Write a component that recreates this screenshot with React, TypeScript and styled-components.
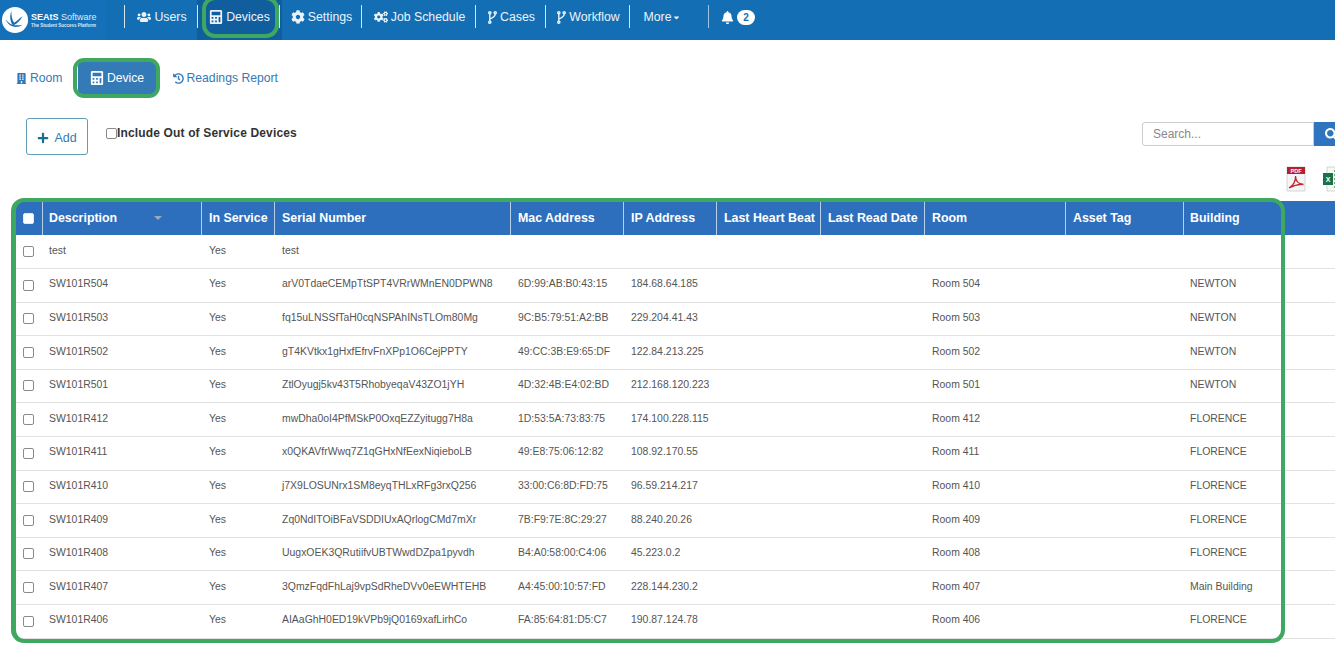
import React from 'react'
import styled, { createGlobalStyle } from 'styled-components'
import { FaUsers, FaCalculator, FaCog, FaCogs, FaBell, FaPlus, FaHistory, FaBuilding, FaSearch, FaCaretDown } from 'react-icons/fa'

const GlobalStyle = createGlobalStyle`
  html, body { margin: 0; padding: 0; background: #fff; overflow: hidden; }
  body { font-family: "Liberation Sans", Arial, sans-serif; color: #555; }
`

const ForkIcon = () => (
  <svg width="9" height="13" viewBox="0 0 9 13" fill="none" stroke="currentColor" strokeWidth="1.400">
    <circle cx="1.800" cy="1.800" r="1.100" />
    <circle cx="7.200" cy="1.800" r="1.100" />
    <circle cx="1.800" cy="11.200" r="1.100" />
    <path d="M1.800 3v7M7.200 3c0 3-2 3.500-5.400 5" />
  </svg>
)

const navItems = [
  { label: 'Users', icon: <FaUsers />, width: 73 },
  { label: 'Devices', icon: <FaCalculator />, width: 82, active: true },
  { label: 'Settings', icon: <FaCog />, width: 82 },
  { label: 'Job Schedule', icon: <FaCogs />, width: 114 },
  { label: 'Cases', icon: <ForkIcon />, width: 70 },
  { label: 'Workflow', icon: <ForkIcon />, width: 84 },
]

const rows = [
  ['test', 'Yes', 'test', '', '', '', ''],
  ['SW101R504', 'Yes', 'arV0TdaeCEMpTtSPT4VRrWMnEN0DPWN8', '6D:99:AB:B0:43:15', '184.68.64.185', 'Room 504', 'NEWTON'],
  ['SW101R503', 'Yes', 'fq15uLNSSfTaH0cqNSPAhINsTLOm80Mg', '9C:B5:79:51:A2:BB', '229.204.41.43', 'Room 503', 'NEWTON'],
  ['SW101R502', 'Yes', 'gT4KVtkx1gHxfEfrvFnXPp1O6CejPPTY', '49:CC:3B:E9:65:DF', '122.84.213.225', 'Room 502', 'NEWTON'],
  ['SW101R501', 'Yes', 'ZtlOyugj5kv43T5RhobyeqaV43ZO1jYH', '4D:32:4B:E4:02:BD', '212.168.120.223', 'Room 501', 'NEWTON'],
  ['SW101R412', 'Yes', 'mwDha0oI4PfMSkP0OxqEZZyitugg7H8a', '1D:53:5A:73:83:75', '174.100.228.115', 'Room 412', 'FLORENCE'],
  ['SW101R411', 'Yes', 'x0QKAVfrWwq7Z1qGHxNfEexNiqieboLB', '49:E8:75:06:12:82', '108.92.170.55', 'Room 411', 'FLORENCE'],
  ['SW101R410', 'Yes', 'j7X9LOSUNrx1SM8eyqTHLxRFg3rxQ256', '33:00:C6:8D:FD:75', '96.59.214.217', 'Room 410', 'FLORENCE'],
  ['SW101R409', 'Yes', 'Zq0NdITOiBFaVSDDIUxAQrlogCMd7mXr', '7B:F9:7E:8C:29:27', '88.240.20.26', 'Room 409', 'FLORENCE'],
  ['SW101R408', 'Yes', 'UugxOEK3QRutiifvUBTWwdDZpa1pyvdh', 'B4:A0:58:00:C4:06', '45.223.0.2', 'Room 408', 'FLORENCE'],
  ['SW101R407', 'Yes', '3QmzFqdFhLaj9vpSdRheDVv0eEWHTEHB', 'A4:45:00:10:57:FD', '228.144.230.2', 'Room 407', 'Main Building'],
  ['SW101R406', 'Yes', 'AIAaGhH0ED19kVPb9jQ0169xafLirhCo', 'FA:85:64:81:D5:C7', '190.87.124.78', 'Room 406', 'FLORENCE'],
]

const columns = [
  { label: 'Description', width: 159 },
  { label: 'In Service', width: 73 },
  { label: 'Serial Number', width: 236 },
  { label: 'Mac Address', width: 113 },
  { label: 'IP Address', width: 93 },
  { label: 'Last Heart Beat', width: 104 },
  { label: 'Last Read Date', width: 104 },
  { label: 'Room', width: 141 },
  { label: 'Asset Tag', width: 118 },
  { label: 'Building', width: 152 },
]

export default function App() {
  return (
    <Page>
      <GlobalStyle />
      <NavBar>
        <Logo>
          <svg width="28" height="28" viewBox="0 0 30 30">
            <circle cx="15" cy="15" r="14" fill="#fff" />
            <path d="M11 5c-2 7-1 12 2 16 2-1 7-4 10-10-4 3-7 6-9 7-2-3-3-8-3-13z" fill="#146eb4" />
            <path d="M5 14c1 4 4 7 8 8 3 1 7 0 10-2-4 1-8 1-11 0-3-1-5-3-7-6z" fill="#146eb4" />
          </svg>
          <LogoText>
            <LogoTitle><b>SEAtS</b> Software</LogoTitle>
            <LogoTagline>The Student Success Platform</LogoTagline>
          </LogoText>
        </Logo>
        <NavList>
          {navItems.map((item) => (
            <NavItem key={item.label} $width={item.width} $active={item.active}>
              {item.icon}
              {item.label}
            </NavItem>
          ))}
          <MoreItem>More<FaCaretDown /></MoreItem>
          <BellItem>
            <FaBell />
            <Badge>2</Badge>
          </BellItem>
        </NavList>
        <HighlightNav />
      </NavBar>

      <Tabs>
        <Tab><FaBuilding />Room</Tab>
        <ActiveTab>
          <FaCalculator />Device
          <HighlightTab />
        </ActiveTab>
        <Tab><FaHistory />Readings Report</Tab>
      </Tabs>

      <Toolbar>
        <AddButton><FaPlus />Add</AddButton>
        <OutOfService>
          <OutCheck type="checkbox" />
          Include Out of Service Devices
        </OutOfService>
        <SearchGroup>
          <SearchInput placeholder="Search..." />
          <SearchButton><FaSearch /></SearchButton>
        </SearchGroup>
      </Toolbar>

      <ExportRow>
        <svg width="24" height="26" viewBox="0 0 24 26">
          <path d="M3 1h18v24H3z" fill="#f5f5f5" stroke="#ccc" strokeWidth="0.8" />
          <rect x="3" y="1" width="18" height="7" fill="#b5202a" />
          <text x="12" y="6.6" fontSize="5.5" fontWeight="700" fill="#fff" textAnchor="middle" fontFamily="Liberation Sans">PDF</text>
          <path d="M5 22c4-2 7-7 6.5-12 0 5 3 8 8 8.5-5-.5-10 1-14.500 3.500z" fill="none" stroke="#c0272d" strokeWidth="1.300" />
        </svg>
        <svg width="24" height="26" viewBox="0 0 24 26">
          <path d="M5 1h16v24H5z" fill="#f4f8f4" stroke="#ccc" strokeWidth="0.8" />
          <path d="M12 5h8M12 9h8M12 13h8M12 17h8M12 21h8" stroke="#3f9a60" strokeWidth="1.500" />
          <rect x="1" y="7" width="10" height="12" fill="#1e7145" />
          <text x="6" y="16" fontSize="7" fontWeight="700" fill="#fff" textAnchor="middle" fontFamily="Liberation Sans">X</text>
        </svg>
      </ExportRow>

      <TableWrap>
        <Table>
          <colgroup>
            <col style={{ width: 26 }} />
            {columns.map((c) => <col key={c.label} style={{ width: c.width }} />)}
          </colgroup>
          <thead>
            <tr>
              <HeadCheck><HeaderBox type="checkbox" /></HeadCheck>
              {columns.map((c, i) => (
                <HeadCell key={c.label}>
                  {c.label}
                  {i === 0 && <SortCaret />}
                </HeadCell>
              ))}
            </tr>
          </thead>
          <tbody>
            {rows.map((r) => (
              <Row key={r[0]}>
                <CheckCell><RowBox type="checkbox" /></CheckCell>
                <Cell>{r[0]}</Cell>
                <Cell>{r[1]}</Cell>
                <Cell>{r[2]}</Cell>
                <Cell>{r[3]}</Cell>
                <Cell>{r[4]}</Cell>
                <Cell />
                <Cell />
                <Cell>{r[5]}</Cell>
                <Cell />
                <Cell>{r[6]}</Cell>
              </Row>
            ))}
          </tbody>
        </Table>
        <HighlightTable />
      </TableWrap>
    </Page>
  )
}

const Page = styled.div`
  width: 1335px;
  height: 649px;
  overflow: hidden;
`

const NavBar = styled.div`
  position: relative;
  display: flex;
  height: 40px;
  background: #146eb4;
`

const Logo = styled.div`
  display: flex;
  align-items: center;
  gap: 2px;
  width: 105px;
  padding-left: 1px;
  box-sizing: border-box;
  background: #1470b8;
`

const LogoText = styled.div`
  display: flex;
  flex-direction: column;
  color: #fff;
  white-space: nowrap;
`

const LogoTitle = styled.div`
  font-size: 9px;
  line-height: 10px;
  color: #dcebf7;
  b { color: #fff; }
`

const LogoTagline = styled.div`
  font-size: 4.500px;
  line-height: 7px;
  font-weight: 700;
  color: #dcebf7;
`

const NavList = styled.div`
  display: flex;
  align-items: center;
  margin-left: 19px;
  height: 40px;
`

const NavItem = styled.div<{ $width: number; $active?: boolean }>`
  display: flex;
  align-items: center;
  justify-content: center;
  gap: 3px;
  width: ${(p) => p.$width}px;
  height: 40px;
  box-sizing: border-box;
  padding: 0 0 6px 3px;
  font-size: 12.300px;
  color: #eaf3fa;
  white-space: nowrap;
  background: ${(p) => (p.$active ? '#115e9e' : 'transparent')};
  box-shadow: ${(p) => (p.$active ? '3px 0 0 #115e9e' : 'none')};
  position: relative;
  &::before {
    content: '';
    position: absolute;
    left: 0;
    top: 5px;
    height: 23px;
    width: 1px;
    background: #d7e6f3;
  }
  svg { font-size: 14px; flex: none; }
`

const MoreItem = styled(NavItem).attrs({ $width: 79 })`
  gap: 0;
  padding: 0 13px 6px 0;
  svg { font-size: 9px; }
`

const BellItem = styled.div`
  display: flex;
  align-items: center;
  gap: 3px;
  height: 40px;
  box-sizing: border-box;
  padding: 0 0 6px 13px;
  position: relative;
  color: #fff;
  font-size: 13px;
  &::before {
    content: '';
    position: absolute;
    left: 0;
    top: 5px;
    height: 23px;
    width: 1px;
    background: #9fc5e3;
  }
`

const Badge = styled.span`
  width: 18px;
  height: 15px;
  border-radius: 8px;
  background: #fff;
  color: #146eb4;
  font-size: 10px;
  font-weight: 700;
  line-height: 15px;
  text-align: center;
`

const HighlightNav = styled.div`
  position: absolute;
  left: 202px;
  top: -4px;
  width: 77px;
  height: 42px;
  box-sizing: border-box;
  border: 4px solid #3ea860;
  border-radius: 13px;
`

const Tabs = styled.div`
  display: flex;
  align-items: center;
  height: 36px;
  margin: 20px 0 0 16px;
`

const Tab = styled.div`
  display: flex;
  align-items: center;
  gap: 3px;
  font-size: 12.200px;
  color: #337ab7;
  white-space: nowrap;
  svg { font-size: 11px; }
`

const ActiveTab = styled(Tab)`
  position: relative;
  height: 32px;
  width: 79px;
  box-sizing: border-box;
  justify-content: center;
  margin: 0 16px 0 15px;
  border-radius: 4px;
  color: #fff;
  background: #337ab7;
  svg { font-size: 14px; }
`

const HighlightTab = styled.div`
  position: absolute;
  left: -5px;
  top: -4px;
  right: -3px;
  bottom: -4px;
  border: 4px solid #3ea860;
  border-radius: 11px;
`

const Toolbar = styled.div`
  display: flex;
  align-items: flex-start;
  height: 38px;
  margin: 22px 0 0 26px;
  position: relative;
`

const AddButton = styled.div`
  display: flex;
  align-items: center;
  justify-content: center;
  gap: 5px;
  width: 62px;
  height: 37px;
  box-sizing: border-box;
  padding-top: 2px;
  border: 1px solid #5f9fb5;
  border-radius: 3px;
  color: #337ab7;
  font-size: 12.500px;
  svg { font-size: 12px; color: #1b6d91; }
`

const OutOfService = styled.label`
  display: flex;
  align-items: center;
  margin: 8px 0 0 18px;
  font-size: 12px;
  font-weight: 700;
  color: #333;
  letter-spacing: 0.15px;
`

const OutCheck = styled.input`
  width: 11px;
  height: 11px;
  margin: 0;
  appearance: none;
  background: #fff;
  border: 1px solid #8a8a8a;
  border-radius: 2px;
`

const SearchGroup = styled.div`
  display: flex;
  margin: 4px 0 0 auto;
`

const SearchInput = styled.input`
  width: 172px;
  height: 24px;
  box-sizing: border-box;
  padding: 0 10px 1px;
  border: 1px solid #ccc;
  border-radius: 3px 0 0 3px;
  font-family: inherit;
  font-size: 12px;
  outline: none;
  &::placeholder { color: #888; }
`

const SearchButton = styled.div`
  display: flex;
  align-items: center;
  justify-content: flex-start;
  width: 21px;
  height: 24px;
  padding-left: 11px;
  box-sizing: border-box;
  background: #2e74bf;
  color: #fff;
  font-size: 13px;
  svg { flex: none; }
`

const ExportRow = styled.div`
  display: flex;
  justify-content: flex-end;
  gap: 14px;
  height: 26px;
  margin: 10px -11px 0 0;
`

const TableWrap = styled.div`
  position: relative;
  margin: 9px 0 0 16px;
`

const Table = styled.table`
  width: 1319px;
  table-layout: fixed;
  border-collapse: collapse;
`

const HeadCheck = styled.th`
  height: 33px;
  padding: 0 2px 1px 0;
  background: #2e6fbd;
  text-align: center;
`

const HeadCell = styled.th`
  position: relative;
  height: 33px;
  padding: 0 0 0 8px;
  background: #2e6fbd;
  color: #fff;
  font-size: 12.400px;
  font-weight: 700;
  text-align: left;
  white-space: nowrap;
  box-shadow: inset 1px 0 0 #b8cfe9;
  &:nth-child(2), &:last-child { padding-left: 7px; }
`

const SortCaret = styled.span`
  position: absolute;
  left: 112px;
  top: 15px;
  border-left: 4px solid transparent;
  border-right: 4px solid transparent;
  border-top: 4px solid #9aa9bd;
`

const Row = styled.tr`
  height: 33.600px;
  border-bottom: 1px solid #e2e2e2;
`

const CheckCell = styled.td`
  padding: 0 2px 2px 0;
  text-align: center;
`

const Cell = styled.td`
  padding: 0 0 3px 8px;
  font-size: 10.450px;
  color: #555;
  white-space: nowrap;
  &:nth-child(2), &:last-child { padding-left: 7px; }
`

const HeaderBox = styled.input`
  width: 11px;
  height: 11px;
  margin: 0;
  vertical-align: middle;
  appearance: none;
  background: #fff;
  border: 1px solid #e4e9f2;
  border-radius: 2px;
`

const RowBox = styled.input`
  width: 11px;
  height: 11px;
  margin: 0;
  vertical-align: middle;
  appearance: none;
  background: #fff;
  border: 1px solid #8a8a8a;
  border-radius: 2px;
`

const HighlightTable = styled.div`
  position: absolute;
  left: -5px;
  top: -3px;
  width: 1274px;
  height: 445px;
  box-sizing: border-box;
  border: 4px solid #3ea860;
  border-left-width: 5px;
  border-radius: 13px;
  pointer-events: none;
`
